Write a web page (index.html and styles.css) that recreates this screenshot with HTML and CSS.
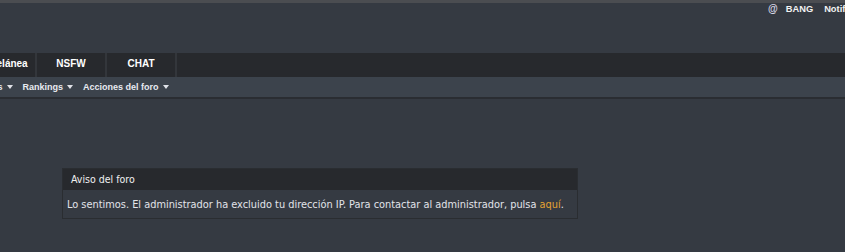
FILE: index.html
```html
<!DOCTYPE html>
<html lang="es">
<head>
<meta charset="utf-8">
<title>Aviso del foro</title>
<link rel="stylesheet" href="styles.css">
</head>
<body>
<div class="topline"></div>
<header class="header">
  <div class="userbar">
    <span class="at">@</span>
    <span class="user">BANG</span>
    <span class="user">Notificaciones</span>
  </div>
</header>
<nav class="tabs">
  <a class="tab first">Miscelánea</a>
  <a class="tab">NSFW</a>
  <a class="tab">CHAT</a>
</nav>
<div class="subnav">
  <a class="subitem first">Miembros<i class="caret"></i></a>
  <a class="subitem">Rankings<i class="caret"></i></a>
  <a class="subitem">Acciones del foro<i class="caret"></i></a>
</div>
<main class="content">
  <section class="notice">
    <div class="notice-head">Aviso del foro</div>
    <div class="notice-body">Lo sentimos. El administrador ha excluido tu dirección IP. Para contactar al administrador, pulsa <a class="link">aquí</a>.</div>
  </section>
</main>
</body>
</html>
```

FILE: styles.css
```css
html, body {
  margin: 0;
  padding: 0;
}
body {
  background: #353a42;
  overflow: hidden;
  width: 845px;
  height: 252px;
  font-family: "Liberation Sans", Arial, sans-serif;
  color: #fff;
}
.topline {
  height: 3px;
  background: #4b4d51;
}
.header {
  height: 50px;
  box-sizing: border-box;
  padding-top: 0;
  padding-left: 768px;
  white-space: nowrap;
}
.userbar {
  display: flex;
  gap: 11px;
  font-size: 9.3px;
  font-weight: bold;
  color: #f2f2f2;
  line-height: 12px;
}
.at {
  font-size: 10px;
  color: #d8d8e8;
  margin-right: -3px;
}
.tabs {
  display: flex;
  height: 24px;
  background: #27292d;
  white-space: nowrap;
}
.tab {
  width: 68px;
  border-right: 2px solid #33363b;
  text-align: center;
  font-size: 10px;
  font-weight: bold;
  line-height: 22px;
  color: #fff;
}
.tab.first {
  margin-left: -33px;
}
.subnav {
  display: flex;
  height: 20px;
  background: #3c434c;
  border-bottom: 2px solid #2a2d32;
  white-space: nowrap;
  align-items: center;
}
.subitem {
  display: flex;
  align-items: center;
  gap: 4px;
  margin-right: 10px;
  font-size: 9px;
  font-weight: bold;
  color: #e8eaf0;
}
.subitem.first {
  margin-left: -40px;
}
.caret {
  width: 0;
  height: 0;
  border-left: 3.5px solid transparent;
  border-right: 3.5px solid transparent;
  border-top: 4px solid #e0e2e8;
}
.content {
  padding: 69px 0 0 62px;
}
.notice {
  width: 516px;
  box-sizing: border-box;
  border: 1px solid #2a2d31;
}
.notice-head {
  height: 21px;
  background: #27292d;
  padding-left: 8px;
  font-family: "DejaVu Sans Condensed", "DejaVu Sans", sans-serif;
  font-size: 10.5px;
  line-height: 21px;
  color: #f0f0f0;
}
.notice-body {
  height: 28px;
  padding-left: 4px;
  font-family: "DejaVu Sans Condensed", "DejaVu Sans", sans-serif;
  font-size: 10.9px;
  line-height: 29px;
  color: #e2e4ea;
  white-space: nowrap;
}
.link {
  color: #e3a232;
}
```
